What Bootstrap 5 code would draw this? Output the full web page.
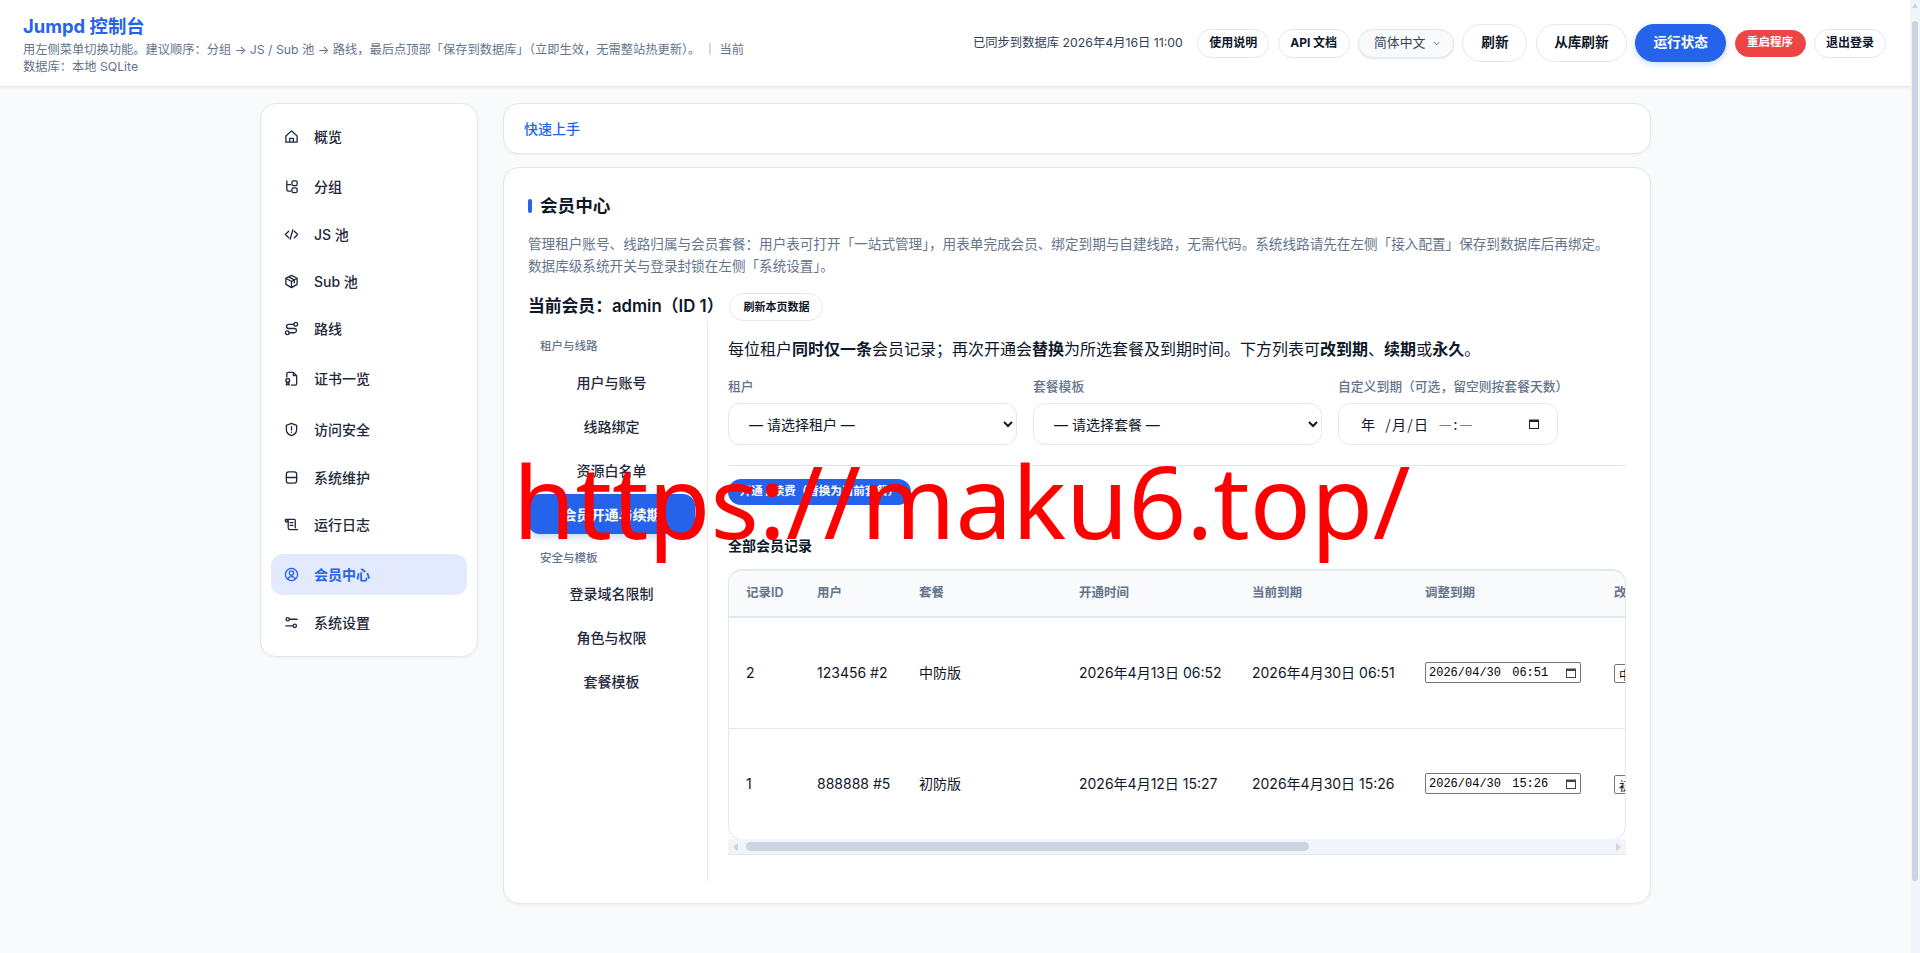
<!DOCTYPE html>
<html lang="zh-CN">
<head>
  <meta charset="UTF-8">
  <meta name="viewport" content="width=device-width, initial-scale=1">
  <title>Jumpd 控制台</title>
  <link href="https://cdn.jsdelivr.net/npm/bootstrap@5.3.0/dist/css/bootstrap.min.css" rel="stylesheet">
  <style>
    body { background: #f8fafc; color: #0f172a; font-family: Inter, "Noto Sans CJK SC", sans-serif; font-size: 14px; height: 953px; position: relative; overflow: hidden; }

    .page-bar { position: absolute; top: 0; right: 0; width: 10px; height: 953px; background: #f1f5f9; }
    .page-bar::before { content: ""; position: absolute; left: 2px; top: 3px; border: 3px solid transparent; border-top: 0; border-bottom: 5px solid #cbd5e1; }
    .page-thumb { position: absolute; left: 2px; top: 21px; width: 6px; height: 860px; background: #cbd5e1; border-radius: 3px; }

    .top-bar { height: 87px; margin-right: 10px; background: #fff; border-bottom: 1px solid #e2e8f0; box-shadow: 0 1px 3px rgba(15,23,42,.05); padding: 0 24px 0 23px; }
    .top-tools { gap: 8.4px; }
    .brand-name { font-size: 18.4px; font-weight: 700; color: #2563eb; line-height: 24px; margin-top: 14px; }
    .brand-note { font-size: 12.25px; line-height: 17px; color: #64748b; width: 725px; margin-top: 3px; }
    .sync-note { font-size: 12.3px; color: #334155; margin-right: 6px; }
    .pill-btn { border: 1px solid #e2e8f0; border-radius: 999px; background: #fff; color: #0f172a; font-weight: 700; font-size: 12px; height: 29px; width: 72px; padding: 0; line-height: 1; }
    .pill-lg { font-size: 13.6px; height: 38px; width: 65px; }
    .pill-wide { width: 91px; }
    .pill-primary { background: #2563eb; border-color: #2563eb; color: #fff; box-shadow: 0 2px 6px rgba(37,99,235,.25); }
    .pill-danger { background: #ef4444; border-color: #ef4444; color: #fff; height: 27px; width: 71px; font-size: 11.5px; }
    .lang-pick { width: 96px; height: 29px; border: 1px solid #e2e8f0; border-radius: 999px; background: #f8fafc; box-shadow: 0 1px 2px rgba(15,23,42,.1); color: #334155; font-size: 12.8px; padding: 0 12px 0 15px; }

    .page-wrap { width: 1391px; margin: 16px 0 0 260px; gap: 25px; }
    .panel { background: #fff; border: 1px solid #e2e8f0; border-radius: 16px; box-shadow: 0 1px 3px rgba(15,23,42,.05); }
    .side-menu { width: 218px; height: 554px; padding: 12px 10px 0; flex: none; }
    .side-link { height: 41px; flex: none; border-radius: 12px; padding-left: 13px; gap: 15px; color: #1e293b; font-size: 14px; font-weight: 500; text-decoration: none; }
    .side-link svg { width: 15px; height: 15px; flex: none; fill: none; stroke: currentColor; stroke-width: 1.4; stroke-linecap: round; stroke-linejoin: round; }
    .side-link.gap-d { margin-top: 10px; }
    .side-link.gap-b { margin-top: 9px; }
    .side-link.gap-a { margin-top: 7px; }
    .side-link.gap-c { margin-top: 6px; }
    .side-link.on { background: #e3eafd; color: #2563eb; font-weight: 700; }

    .main-col { width: 1148px; }
    .guide-box { height: 51px; padding: 0 20px; color: #2563eb; font-size: 14px; font-weight: 500; margin-bottom: 13px; }
    .member-box { height: 737px; padding: 30px 24px 0 24px; }
    .sect-title { font-size: 17.6px; font-weight: 700; line-height: 16px; padding-left: 12px; position: relative; }
    .sect-title::before { content: ""; position: absolute; left: 0; top: 1px; width: 4px; height: 14px; border-radius: 2px; background: #2563eb; }
    .sect-desc { font-size: 13.6px; line-height: 22px; color: #64748b; margin: 19px 0 0; white-space: nowrap; }
    .who-line { margin-top: 16px; gap: 6px; height: 28px; }
    .who-name { font-size: 16.8px; font-weight: 600; }
    .mini-btn { width: 94px; height: 28px; font-size: 11px; }

    .split { height: 560px; }
    .sub-menu { width: 180px; flex: none; border-right: 1px solid #e2e8f0; padding: 17px 12px 0 0; }
    .sub-head { font-size: 11.5px; font-weight: 500; color: #64748b; padding-left: 12px; line-height: 16px; margin-bottom: 8px; }
    .sub-head.later { margin-top: 16px; margin-bottom: 7px; }
    .sub-link { height: 40px; margin-top: 4px; border-radius: 12px; color: #1e293b; font-size: 14px; font-weight: 500; }
    .sub-link.on { background: #2563eb; color: #fff; font-weight: 700; box-shadow: 0 3px 8px rgba(37,99,235,.25); }
    .pane { margin-left: 20px; width: 898px; }
    .pane-intro { font-size: 16px; line-height: 24px; margin: 16px 0 17px; white-space: nowrap; }
    .field-row { gap: 16px; }
    .field-label { font-size: 12.8px; line-height: 18px; font-weight: 500; color: #64748b; margin-bottom: 7px; white-space: nowrap; }
    .field-sel { width: 289px; height: 42px; border: 1px solid #e2e8f0; border-radius: 12px; padding: 0 0 0 16px; font-size: 14px; color: #0f172a; background-color: #fff; appearance: auto; background-image: none; }
    .field-date { width: 220px; height: 42px; border: 1px solid #e2e8f0; border-radius: 12px; padding: 0 17px 0 22px; font-size: 14px; letter-spacing: 1.3px; font-family: "Noto Sans CJK SC", sans-serif; white-space: pre; }
    .divide { border-top: 1px solid #e2e8f0; margin: 20px 0 13px; }
    .go-btn { width: 183px; height: 26px; background: #2563eb; border: 0; border-radius: 999px; color: #fff; font-size: 11.5px; font-weight: 700; padding: 0; white-space: nowrap; }
    .list-title { font-size: 14px; font-weight: 700; line-height: 20px; margin: 31px 0 13px; }

    .grid-scroll { overflow: hidden; border: 1px solid #e2e8f0; border-top-width: 2px; border-radius: 14px; height: 271px; }
    .grid-table { width: 1375px; table-layout: fixed; margin: 0; border-collapse: collapse; font-size: 14px; }
    .grid-table th { background: #f8fafc; color: #64748b; font-size: 12.5px; font-weight: 600; height: 46px; padding: 0 0 0 16px; border-bottom: 2px solid #e2e8f0; vertical-align: middle; }
    .grid-table td { height: 111px; padding: 0 0 0 16px; border-bottom: 1px solid #e2e8f0; vertical-align: middle; color: #0f172a; white-space: nowrap; }
    .grid-table th:first-child, .grid-table td:first-child { padding-left: 17px; }
    .grid-table tr:last-child td { border-bottom: 0; }
    .date-cell { width: 156px; height: 21px; border: 1px solid #767676; border-radius: 2px; font-family: "Liberation Mono", monospace; font-size: 12px; word-spacing: 4px; padding: 0 3px; color: #000; background: #fff; }
    .date-cell svg, .field-date svg { width: 12px; height: 12px; flex: none; }
    .plan-pick { width: 80px; height: 19px; font-size: 12px; border: 1px solid #767676; border-radius: 2px; background: #fff; font-family: "Noto Sans CJK SC", sans-serif; padding: 0; margin-top: 3px; }

    .grid-bar { height: 16px; margin-top: -1px; background: #f1f5f9; border-bottom: 1px solid #e2e8f0; padding: 0 5px; }
    .bar-thumb { width: 563px; height: 9px; margin-left: 8px; background: #cbd5e1; border-radius: 5px; }
    .bar-left, .bar-right { width: 0; height: 0; border-top: 4px solid transparent; border-bottom: 4px solid transparent; }
    .bar-left { border-right: 5px solid #cbd5e1; }
    .bar-right { border-left: 5px solid #cbd5e1; margin-left: auto; }

    .mark-text { position: absolute; left: 513px; top: 435px; font-family: "Noto Sans", sans-serif; font-size: 101px; line-height: 1.3; color: #ff0000; white-space: nowrap; pointer-events: none; }
  </style>
</head>
<body>

<header class="top-bar d-flex justify-content-between">
  <div>
    <div class="brand-name">Jumpd 控制台</div>
    <div class="brand-note">用左侧菜单切换功能。建议顺序：分组 → JS / Sub 池 → 路线，最后点顶部「保存到数据库」（立即生效，无需整站热更新）。 ｜ 当前数据库：本地 SQLite</div>
  </div>
  <div class="top-tools d-flex align-items-center">
    <span class="sync-note">已同步到数据库 2026年4月16日 11:00</span>
    <button class="pill-btn">使用说明</button>
    <button class="pill-btn">API 文档</button>
    <div class="lang-pick d-flex align-items-center justify-content-between">
      <span>简体中文</span>
      <svg width="9" height="9" viewBox="0 0 10 10" fill="none" stroke="#64748b" stroke-width="1.1"><path d="M2 3.5l3 3 3-3"/></svg>
    </div>
    <button class="pill-btn pill-lg">刷新</button>
    <button class="pill-btn pill-lg pill-wide">从库刷新</button>
    <button class="pill-btn pill-lg pill-wide pill-primary">运行状态</button>
    <button class="pill-btn pill-danger">重启程序</button>
    <button class="pill-btn">退出登录</button>
  </div>
</header>

<div class="page-wrap d-flex align-items-start">
  <nav class="panel side-menu d-flex flex-column">
    <a class="side-link d-flex align-items-center"><svg viewBox="0 0 16 16"><path d="M2 7.5L8 2l6 5.500V14H2zM6 14v-4h4v4"/></svg>概览</a>
    <a class="side-link gap-b d-flex align-items-center"><svg viewBox="0 0 16 16"><path d="M3 2v9a2 2 0 0 0 2 2h2M3 6h4"/><rect x="8.500" y="2" width="5.500" height="5" rx="1.500"/><rect x="8.500" y="9.500" width="5.500" height="5" rx="1.500"/></svg>分组</a>
    <a class="side-link gap-a d-flex align-items-center"><svg viewBox="0 0 16 16"><path d="M5 4.500L1.500 8 5 11.500M11 4.500L14.500 8 11 11.500M9.500 3l-3 10"/></svg>JS 池</a>
    <a class="side-link gap-c d-flex align-items-center"><svg viewBox="0 0 16 16"><path d="M8 1.500l6 3v6.500l-6 3.500-6-3.500V4.500zM2 4.500l6 3.500 6-3.500M8 8v6.500M5 3l6 3.300v3"/></svg>Sub 池</a>
    <a class="side-link gap-c d-flex align-items-center"><svg viewBox="0 0 16 16"><circle cx="3.500" cy="12.500" r="2"/><circle cx="12.500" cy="3.500" r="2"/><path d="M10.500 3.500H5a2.250 2.250 0 0 0 0 4.500h6a2.250 2.250 0 0 1 0 4.500H5.500"/></svg>路线</a>
    <a class="side-link gap-b d-flex align-items-center"><svg viewBox="0 0 16 16"><path d="M3 6V3a1.500 1.500 0 0 1 1.500-1.500H10L13.500 5v8.500A1.500 1.500 0 0 1 12 15H8M10 1.500V5h3.500"/><circle cx="4" cy="10" r="2"/><path d="M3 12l-.5 3L4 14l1.500 1L5 12"/></svg>证书一览</a>
    <a class="side-link gap-d d-flex align-items-center"><svg viewBox="0 0 16 16"><path d="M8 1.500l5.500 2v4.500c0 3.300-2.300 5.500-5.500 6.500-3.200-1-5.500-3.200-5.500-6.500V3.500zM8 5v3.500M8 10.800v.2"/></svg>访问安全</a>
    <a class="side-link gap-a d-flex align-items-center"><svg viewBox="0 0 16 16"><rect x="2.500" y="2" width="11" height="12" rx="2.500"/><path d="M2.500 8h11"/></svg>系统维护</a>
    <a class="side-link gap-c d-flex align-items-center"><svg viewBox="0 0 16 16"><path d="M1.500 2.500h9.500a1 1 0 0 1 1 1v8M3.500 2.500v1.800a1 1 0 0 1-2 0V3.500a1 1 0 0 1 1-1M4.500 2.500v9a2 2 0 0 0 1.500 2h8.500M6.500 6h3M6.500 9h3"/></svg>运行日志</a>
    <a class="side-link on gap-b d-flex align-items-center"><svg viewBox="0 0 16 16"><circle cx="8" cy="8" r="6.500"/><circle cx="8" cy="6.500" r="2.300"/><path d="M3.800 12.800c.8-1.800 2.300-2.600 4.200-2.600s3.400.8 4.200 2.600"/></svg>会员中心</a>
    <a class="side-link gap-a d-flex align-items-center"><svg viewBox="0 0 16 16"><circle cx="4" cy="4.500" r="1.800"/><circle cx="11.500" cy="11.500" r="1.800"/><path d="M6 4.500h8M2 11.500h7.500"/></svg>系统设置</a>
  </nav>

  <div class="main-col">
    <div class="panel guide-box d-flex align-items-center">快速上手</div>
    <section class="panel member-box">
      <div class="sect-title">会员中心</div>
      <p class="sect-desc">管理租户账号、线路归属与会员套餐：用户表可打开「一站式管理」，用表单完成会员、绑定到期与自建线路，无需代码。系统线路请先在左侧「接入配置」保存到数据库后再绑定。<br>数据库级系统开关与登录封锁在左侧「系统设置」。</p>
      <div class="who-line d-flex align-items-center">
        <span class="who-name">当前会员：admin（ID 1）</span>
        <button class="pill-btn mini-btn">刷新本页数据</button>
      </div>
      <div class="split d-flex">
        <aside class="sub-menu">
          <div class="sub-head">租户与线路</div>
          <div class="sub-link d-flex align-items-center justify-content-center">用户与账号</div>
          <div class="sub-link d-flex align-items-center justify-content-center">线路绑定</div>
          <div class="sub-link d-flex align-items-center justify-content-center">资源白名单</div>
          <div class="sub-link on d-flex align-items-center justify-content-center">会员开通与续期</div>
          <div class="sub-head later">安全与模板</div>
          <div class="sub-link d-flex align-items-center justify-content-center">登录域名限制</div>
          <div class="sub-link d-flex align-items-center justify-content-center">角色与权限</div>
          <div class="sub-link d-flex align-items-center justify-content-center">套餐模板</div>
        </aside>
        <div class="pane">
          <p class="pane-intro">每位租户<b>同时仅一条</b>会员记录；再次开通会<b>替换</b>为所选套餐及到期时间。下方列表可<b>改到期</b>、<b>续期</b>或<b>永久</b>。</p>
          <div class="field-row d-flex">
            <div>
              <div class="field-label">租户</div>
              <select class="field-sel form-select"><option>— 请选择租户 —</option></select>
            </div>
            <div>
              <div class="field-label">套餐模板</div>
              <select class="field-sel form-select"><option>— 请选择套餐 —</option></select>
            </div>
            <div>
              <div class="field-label">自定义到期（可选，留空则按套餐天数）</div>
              <div class="field-date d-flex align-items-center justify-content-between"><span>年  /月/日  —:—</span>
                <svg viewBox="0 0 12 12"><path fill="#222" d="M1 1.500h10V11H1zM2 4v6h8V4z"/></svg>
              </div>
            </div>
          </div>
          <div class="divide"></div>
          <button class="go-btn">开通 / 续费（替换为当前套餐）</button>
          <div class="list-title">全部会员记录</div>
          <div class="grid-scroll">
            <table class="grid-table">
              <colgroup><col style="width:72px"><col style="width:102px"><col style="width:160px"><col style="width:173px"><col style="width:173px"><col style="width:189px"><col style="width:130px"><col></colgroup>
              <thead>
                <tr><th>记录ID</th><th>用户</th><th>套餐</th><th>开通时间</th><th>当前到期</th><th>调整到期</th><th>改套餐</th><th>操作</th></tr>
              </thead>
              <tbody>
                <tr>
                  <td>2</td><td>123456 #2</td><td>中防版</td><td>2026年4月13日 06:52</td><td>2026年4月30日 06:51</td>
                  <td><div class="date-cell d-flex align-items-center justify-content-between"><span>2026/04/30 06:51</span><svg viewBox="0 0 12 12"><path fill="#444" d="M1 1.500h10V11H1zM2 4v6h8V4z"/></svg></div></td>
                  <td><select class="plan-pick"><option>中防版</option></select></td>
                  <td><button class="pill-btn">保存</button></td>
                </tr>
                <tr>
                  <td>1</td><td>888888 #5</td><td>初防版</td><td>2026年4月12日 15:27</td><td>2026年4月30日 15:26</td>
                  <td><div class="date-cell d-flex align-items-center justify-content-between"><span>2026/04/30 15:26</span><svg viewBox="0 0 12 12"><path fill="#444" d="M1 1.500h10V11H1zM2 4v6h8V4z"/></svg></div></td>
                  <td><select class="plan-pick"><option>初防版</option></select></td>
                  <td><button class="pill-btn">保存</button></td>
                </tr>
              </tbody>
            </table>
          </div>
          <div class="grid-bar d-flex align-items-center">
            <span class="bar-left"></span>
            <span class="bar-thumb"></span>
            <span class="bar-right"></span>
          </div>
        </div>
      </div>
    </section>
  </div>
</div>

<div class="page-bar"><div class="page-thumb"></div></div>
<div class="mark-text">https://maku6.top/</div>

<script src="https://cdn.jsdelivr.net/npm/bootstrap@5.3.0/dist/js/bootstrap.bundle.min.js"></script>
</body>
</html>
